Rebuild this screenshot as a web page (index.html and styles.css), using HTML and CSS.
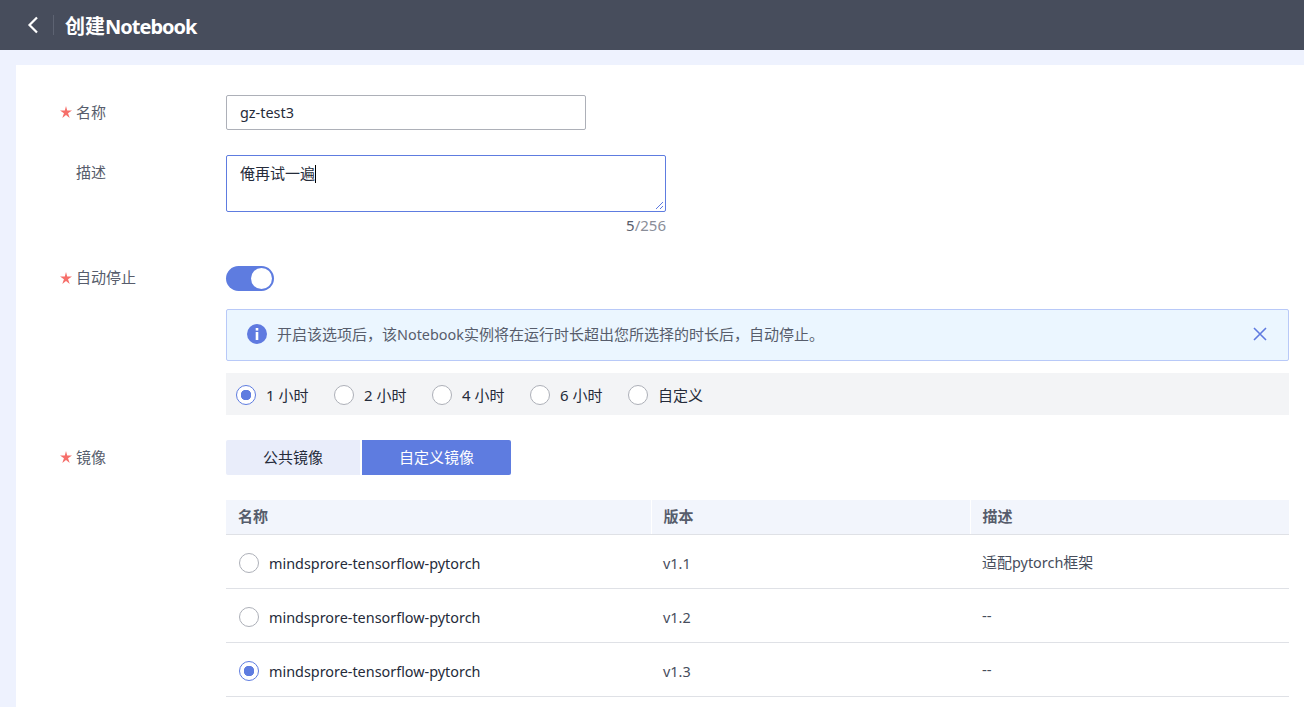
FILE: index.html
```html
<!DOCTYPE html>
<html lang="zh-CN">
<head>
<meta charset="UTF-8">
<title>创建Notebook</title>
<link rel="stylesheet" href="styles.css">
</head>
<body>
  <header class="header">
    <a class="back" href="#">
      <svg width="12" height="18" viewBox="0 0 12 18"><path d="M10 1.5 2.500 9l7.500 7.500" fill="none" stroke="#fff" stroke-width="2.200"/></svg>
    </a>
    <span class="header-line"></span>
    <h1 class="title">创建<span class="title-en">Notebook</span></h1>
  </header>

  <main class="card">
    <div class="row row-name">
      <label class="label required">名称</label>
      <div class="control"><div class="input">gz-test3</div></div>
    </div>

    <div class="row row-desc">
      <label class="label">描述</label>
      <div class="control">
        <div class="textarea">
          <span>俺再试一遍</span><span class="caret"></span>
          <svg class="grip" width="9" height="9" viewBox="0 0 9 9"><path d="M1 8 8 1M5 8l3-3" fill="none" stroke="#5f7ae0" stroke-width="1"/></svg>
        </div>
        <div class="counter"><b>5</b>/256</div>
      </div>
    </div>

    <div class="row row-stop">
      <label class="label required">自动停止</label>
      <div class="control">
        <div class="switch"><span class="knob"></span></div>
        <div class="alert">
          <svg class="alert-icon" width="20" height="20" viewBox="0 0 20 20"><circle cx="10" cy="10" r="10" fill="#5f7ae0"/><rect x="8.700" y="8" width="2.600" height="8" fill="#fff"/><rect x="8.700" y="4" width="2.600" height="2.600" fill="#fff"/></svg>
          <span class="alert-text">开启该选项后，该<span class="latin">Notebook</span>实例将在运行时长超出您所选择的时长后，自动停止。</span>
          <svg class="alert-close" width="14" height="14" viewBox="0 0 14 14"><path d="M1 1l12 12M13 1 1 13" fill="none" stroke="#5f7ae0" stroke-width="1.600"/></svg>
        </div>
        <div class="hours">
          <div class="radio-item"><span class="radio on"></span>1 小时</div>
          <div class="radio-item"><span class="radio"></span>2 小时</div>
          <div class="radio-item"><span class="radio"></span>4 小时</div>
          <div class="radio-item"><span class="radio"></span>6 小时</div>
          <div class="radio-item"><span class="radio"></span>自定义</div>
        </div>
      </div>
    </div>

    <div class="row row-image">
      <label class="label required">镜像</label>
      <div class="control">
        <div class="tabs">
          <div class="tab">公共镜像</div>
          <div class="tab active">自定义镜像</div>
        </div>
        <table class="table">
          <thead>
            <tr><th class="col-name">名称</th><th class="col-ver">版本</th><th>描述</th></tr>
          </thead>
          <tbody>
            <tr>
              <td class="low"><div class="cell-name"><span class="radio"></span><span class="latin">mindsprore-tensorflow-pytorch</span></div></td>
              <td class="latin low">v1.1</td>
              <td>适配<span class="latin">pytorch</span>框架</td>
            </tr>
            <tr>
              <td class="low"><div class="cell-name"><span class="radio"></span><span class="latin">mindsprore-tensorflow-pytorch</span></div></td>
              <td class="latin low">v1.2</td>
              <td>--</td>
            </tr>
            <tr>
              <td class="low"><div class="cell-name"><span class="radio on"></span><span class="latin">mindsprore-tensorflow-pytorch</span></div></td>
              <td class="latin low">v1.3</td>
              <td>--</td>
            </tr>
          </tbody>
        </table>
      </div>
    </div>
  </main>
</body>
</html>
```

FILE: styles.css
```css
* {
  margin: 0;
  padding: 0;
  box-sizing: border-box;
}

html, body {
  height: 707px;
  overflow: hidden;
}

body {
  background-color: #eef2fe;
  font-family: "Noto Sans", "Noto Sans CJK SC", sans-serif;
  font-size: 15px;
  color: #575d6c;
}

.latin {
  font-size: 14.4px;
}

.header {
  display: flex;
  align-items: center;
  height: 50px;
  background-color: #474d5c;
  color: #fff;
}
.back {
  display: flex;
  margin-left: 27px;
  margin-bottom: 1px;
}
.header-line {
  width: 1px;
  height: 20px;
  margin-left: 14px;
  background-color: #5d6372;
}
.title {
  margin-left: 11px;
  font-size: 20px;
  font-weight: 700;
}
.title-en {
  letter-spacing: -1px;
}

.card {
  margin: 15px 0 0 16px;
  padding: 30px 15px 0 44px;
  height: 642px;
  background-color: #fff;
}

.row {
  display: flex;
}
.label {
  flex: none;
  width: 166px;
  padding-left: 16px;
  position: relative;
  line-height: 35px;
}
.required::before {
  content: "";
  position: absolute;
  left: 0;
  top: 11px;
  width: 12px;
  height: 12px;
  background-color: #f66f6a;
  clip-path: polygon(50% 0, 60% 38%, 100% 38%, 67% 60%, 81% 100%, 50% 74%, 19% 100%, 33% 60%, 0 38%, 40% 38%);
}
.control {
  flex: 1;
  min-width: 0;
}

.row-desc {
  margin-top: 25px;
}
.row-stop {
  margin-top: 26px;
}
.row-stop .label {
  line-height: 33px;
}
.row-image {
  margin-top: 25px;
}

.input {
  width: 360px;
  height: 35px;
  padding-left: 13px;
  border: 1px solid #adb0b8;
  border-radius: 2px;
  line-height: 33px;
  font-size: 14.4px;
  color: #252b3a;
}

.textarea {
  position: relative;
  width: 440px;
  height: 57px;
  padding: 6px 13px;
  border: 1px solid #5e7ce0;
  border-radius: 2px;
  line-height: 22px;
  color: #252b3a;
}
.caret {
  display: inline-block;
  width: 1px;
  height: 18px;
  vertical-align: -4px;
  background-color: #000;
}
.grip {
  position: absolute;
  right: 1px;
  bottom: 1px;
}
.counter {
  width: 440px;
  margin-top: 3px;
  text-align: right;
  line-height: 20px;
  color: #8a8e99;
}
.counter b {
  font-weight: 400;
  color: #575d6c;
}

.switch {
  width: 48px;
  height: 25px;
  padding: 2px;
  margin-top: 5px;
  border-radius: 13px;
  background-color: #5e7ce0;
  display: flex;
  justify-content: flex-end;
}
.knob {
  width: 21px;
  height: 21px;
  border-radius: 50%;
  background-color: #fff;
}

.alert {
  display: flex;
  align-items: center;
  height: 52px;
  margin-top: 18px;
  padding: 0 21px 3px 20px;
  background-color: #ebf6ff;
  border: 1px solid #b8c9f8;
  border-radius: 2px;
}
.alert-text {
  flex: 1;
  margin-left: 10px;
  color: #575d6c;
}
.hours {
  display: flex;
  align-items: center;
  height: 42px;
  margin-top: 12px;
  padding-left: 10px;
  background-color: #f3f4f6;
  color: #252b3a;
}
.radio-item {
  display: flex;
  align-items: center;
  width: 98px;
}
.radio-item .radio {
  margin-right: 10px;
  margin-top: 2px;
}

.radio {
  flex: none;
  display: inline-block;
  width: 20px;
  height: 20px;
  border: 1px solid #adb0b8;
  border-radius: 50%;
  background-color: #fff;
}
.radio.on {
  border-color: #5e7ce0;
  background-color: #fff;
  background-image: radial-gradient(circle, #5e7ce0 0, #5e7ce0 5px, transparent 5.500px);
}

.tabs {
  display: flex;
  height: 35px;
}
.tab {
  width: 134px;
  text-align: center;
  line-height: 34px;
  background-color: #e9edfa;
  color: #252b3a;
  border-radius: 2px 0 0 2px;
}
.tab.active {
  width: 149px;
  margin-left: 2px;
  background-color: #5e7ce0;
  color: #fff;
  border-radius: 0 2px 2px 0;
}

.table {
  width: 100%;
  margin-top: 25px;
  border-collapse: collapse;
  table-layout: fixed;
}
.table th {
  height: 34px;
  padding: 0 0 2px 12px;
  text-align: left;
  font-weight: 700;
  color: #575d6c;
  background-color: #f2f5fc;
  border-bottom: 1px solid #dfe1e6;
  border-left: 1px solid #fff;
}
.table th:first-child {
  border-left: none;
}
.col-name {
  width: 425px;
}
.col-ver {
  width: 319px;
}
.table td {
  height: 54px;
  padding-left: 12px;
  border-bottom: 1px solid #dfe1e6;
  color: #474d5c;
}
.table td.low {
  padding-top: 4px;
}
.cell-name {
  display: flex;
  align-items: center;
  color: #252b3a;
}
.cell-name .radio {
  margin-right: 10px;
  margin-left: 1px;
}
```
